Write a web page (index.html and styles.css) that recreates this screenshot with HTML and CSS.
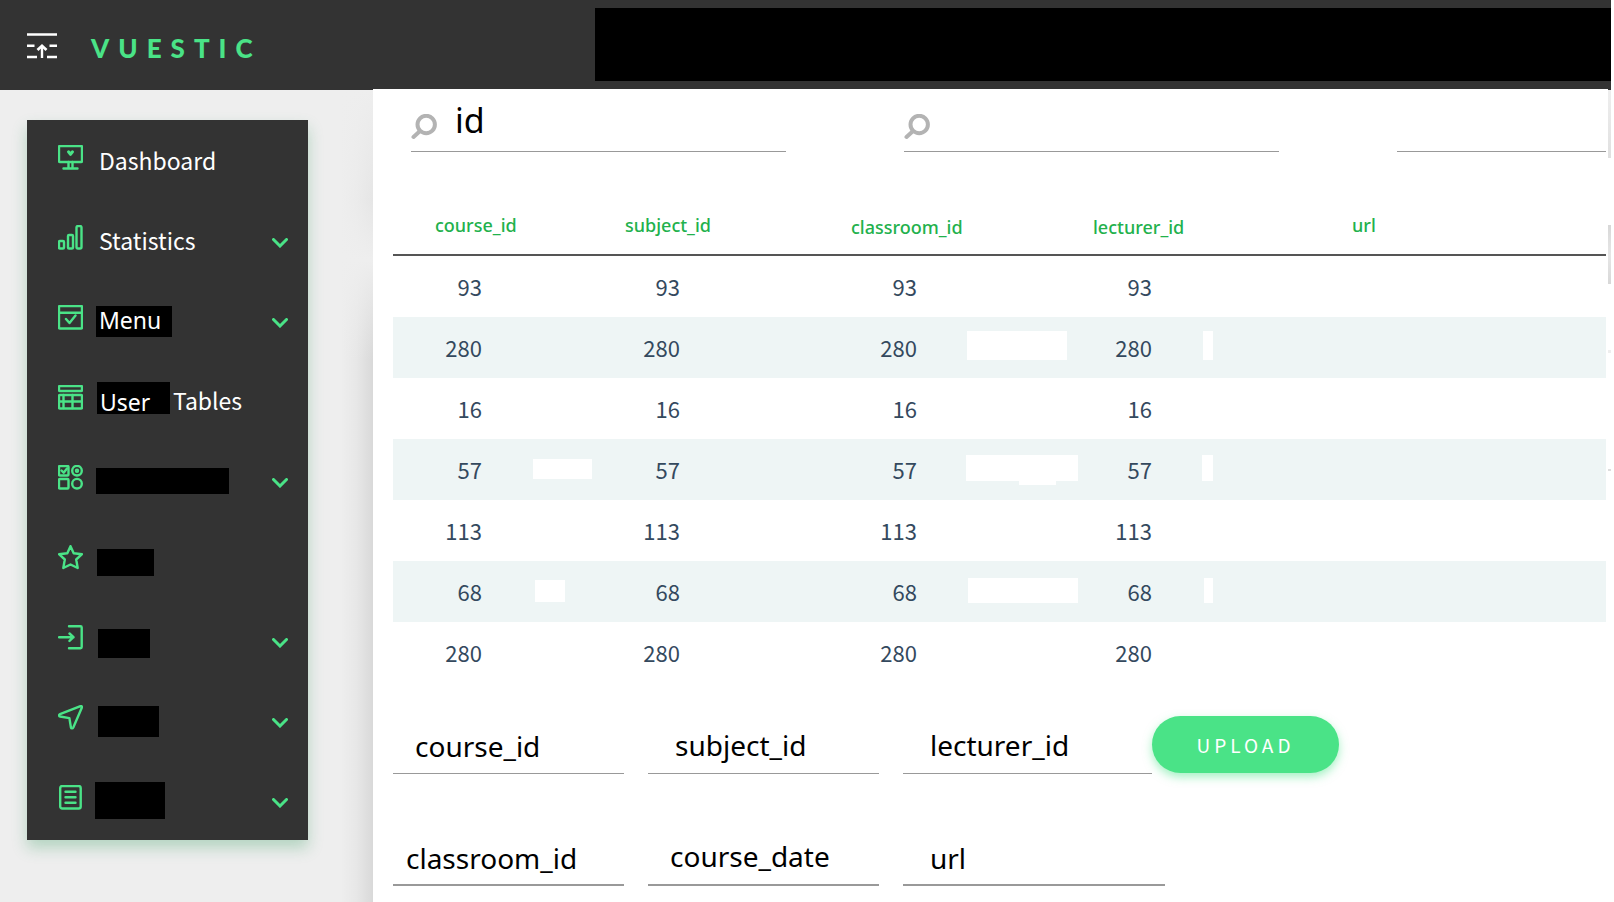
FILE: index.html
```html
<!DOCTYPE html>
<html lang="en">
<head>
<meta charset="utf-8">
<title>Vuestic</title>
<link rel="stylesheet" href="styles.css">
</head>
<body>
<header class="topbar">
  <button class="menu-toggle" type="button" aria-label="Toggle menu">
    <svg width="30" height="26" viewBox="0 0 30 26" fill="none" stroke="#fff" stroke-width="2.4"><path d="M0 1.5H30M0 12.7H7.5M22.5 12.7H30M0 24H10M20 24H30"/><path d="M15 25V13.5" /><path d="M10.500 17L15 12.8L19.500 17" stroke-width="2.800"/></svg>
  </button>
  <a class="logo" href="#">VUESTIC</a>
  <div class="topbar-mask"></div>
</header>
<div class="layout">
  <nav class="sidebar">
    <ul class="menu">
      <li><a class="item" href="#"><svg class="icon" viewBox="0 0 25 25"><rect x="1" y="1" width="23" height="16" rx="1"/><path d="M10.500 17v6M14.500 17v6M5.500 23.500h14"/><path d="M10.500 6.800l2 2.500 2-2.500" stroke-width="3"/></svg><span class="label">Dashboard</span></a></li>
      <li><a class="item" href="#"><svg class="icon" viewBox="0 0 25 25"><rect x="1" y="16" width="5" height="7.500" rx="1"/><rect x="10" y="10" width="5" height="13.500" rx="1"/><rect x="18.500" y="1" width="5" height="22.500" rx="1.500"/></svg><span class="label">Statistics</span><svg class="chevron" viewBox="0 0 16 10"><path d="M1.500 1.500L8 8L14.500 1.500"/></svg></a></li>
      <li><a class="item" href="#"><svg class="icon" viewBox="0 0 25 25"><rect x="1" y="1" width="23" height="22.500" rx="1"/><path d="M1 7.800h23M8 14l3.500 4 6-7.500"/></svg><span class="label boxed menu-box">Menu</span><svg class="chevron" viewBox="0 0 16 10"><path d="M1.500 1.500L8 8L14.500 1.500"/></svg></a></li>
      <li><a class="item" href="#"><svg class="icon" viewBox="0 0 25 25"><rect x="1" y="1" width="23" height="5" rx="1"/><rect x="1" y="10" width="23" height="13.500" rx="1"/><path d="M1 16.500h23M5.500 10v13M14.500 10v13"/></svg><span class="label boxed user-box">User</span><span class="label">Tables</span></a></li>
      <li><a class="item" href="#"><svg class="icon" viewBox="0 0 25 25"><rect x="1" y="1" width="9.500" height="9.500" rx="1"/><path d="M3.500 5.500l2.200 2.200L9 3.500"/><circle cx="19" cy="5.700" r="4.800"/><circle cx="19" cy="5.700" r="1"/><rect x="1" y="14" width="9.500" height="9.500" rx="1"/><circle cx="19" cy="18.700" r="4.800"/></svg><span class="mask mask-a"></span><svg class="chevron" viewBox="0 0 16 10"><path d="M1.500 1.500L8 8L14.500 1.500"/></svg></a></li>
      <li><a class="item" href="#"><svg class="icon" viewBox="0 0 25 25"><path d="M12.500 1.200l3.200 7 8.300 1-5.800 5.300 1.500 8.500-7.200-3.500-7.200 3.500 1.500-8.500L1 9.200l8.300-1z"/></svg><span class="mask mask-b"></span></a></li>
      <li><a class="item" href="#"><svg class="icon" viewBox="0 0 25 25"><path d="M11 1.200H22.500a1.200 1.200 0 0 1 1.200 1.200V22a1.200 1.200 0 0 1-1.200 1.200H11M1 12.200H15.500M11.500 8.500l4 3.700-4 3.700"/></svg><span class="mask mask-c"></span><svg class="chevron" viewBox="0 0 16 10"><path d="M1.500 1.500L8 8L14.500 1.500"/></svg></a></li>
      <li><a class="item" href="#"><svg class="icon" viewBox="0 0 25 25"><path d="M22.500 1.100L2 9.200c-1.300.6-1.200 2 .1 2.300l9.300 1.600 1.500 9.300c.3 1.300 1.800 1.300 2.400.1L23.900 2.500c.3-1-.5-1.700-1.400-1.400z"/></svg><span class="mask mask-d"></span><svg class="chevron" viewBox="0 0 16 10"><path d="M1.500 1.500L8 8L14.500 1.500"/></svg></a></li>
      <li><a class="item" href="#"><svg class="icon" viewBox="0 0 25 25"><rect x="2.200" y="1" width="20.500" height="22.500" rx="2"/><path d="M7.500 6.800h10M7.500 12.200h10M7.500 17.700h10"/></svg><span class="mask mask-e"></span><svg class="chevron" viewBox="0 0 16 10"><path d="M1.500 1.500L8 8L14.500 1.500"/></svg></a></li>
    </ul>
  </nav>
  <main class="panel">
    <div class="search">
      <label class="search-field"><svg class="glass" viewBox="0 0 26 26"><circle cx="15.200" cy="10.500" r="8.700"/><path d="M8.500 17.500L2.500 23"/></svg><input type="text" value="id" aria-label="Search id"></label>
      <label class="search-field"><svg class="glass" viewBox="0 0 26 26"><circle cx="15.200" cy="10.500" r="8.700"/><path d="M8.500 17.500L2.500 23"/></svg><input type="text" aria-label="Search"></label>
      <label class="search-field"><input type="text" aria-label="Filter"></label>
    </div>
    <table class="data">
      <colgroup><col class="c1"><col class="c2"><col class="c3"><col class="c4"><col></colgroup>
      <thead><tr><th class="h1">course_id</th><th class="h2">subject_id</th><th class="h3">classroom_id</th><th class="h4">lecturer_id</th><th class="h5">url</th></tr></thead>
      <tbody>
        <tr><td>93</td><td>93</td><td>93</td><td>93</td><td></td></tr>
        <tr><td>280</td><td>280</td><td>280<i class="blank r2c3"></i></td><td>280<i class="blank r2c4"></i></td><td></td></tr>
        <tr><td>16</td><td>16</td><td>16</td><td>16</td><td></td></tr>
        <tr><td>57<i class="blank r4c1"></i></td><td>57</td><td>57<i class="blank r4c3"></i><i class="blank r4c3b"></i></td><td>57<i class="blank r4c4"></i></td><td></td></tr>
        <tr><td>113</td><td>113</td><td>113</td><td>113</td><td></td></tr>
        <tr><td>68<i class="blank r6c1"></i></td><td>68</td><td>68<i class="blank r6c3"></i></td><td>68<i class="blank r6c4"></i></td><td></td></tr>
        <tr><td>280</td><td>280</td><td>280</td><td>280</td><td></td></tr>
      </tbody>
    </table>
    <form class="upload">
      <div class="row">
        <input class="f1 in22 low" type="text" value="course_id" aria-label="course_id">
        <input class="f1 in28" type="text" value="subject_id" aria-label="subject_id">
        <input class="f2 in28" type="text" value="lecturer_id" aria-label="lecturer_id">
        <button class="btn" type="button">UPLOAD</button>
      </div>
      <div class="row second">
        <input class="f1 in14 low" type="text" value="classroom_id" aria-label="classroom_id">
        <input class="f1 in22" type="text" value="course_date" aria-label="course_date">
        <input class="f3 in28 low" type="text" value="url" aria-label="url">
      </div>
    </form>
  </main>
</div>
</body>
</html>
```
FILE: styles.css
```css
* { box-sizing: border-box; }
html { background: #fff; }
body {
  margin: 0 3px 0 0;
  min-height: 100vh;
  background: #eee;
  display: flex;
  flex-direction: column;
  overflow: hidden;
  font-family: "Noto Sans CJK SC", "Noto Sans", sans-serif;
}
.topbar {
  height: 90px;
  flex: none;
  display: flex;
  align-items: flex-start;
  background: #333;
}
.menu-toggle {
  margin: 33px 0 0 27px;
  padding: 0;
  border: 0;
  background: none;
  line-height: 0;
}
.logo {
  width: 538px;
  margin-top: 32px;
  padding-left: 34px;
  color: #4ae387;
  font: 900 26px/32px Lato, sans-serif;
  letter-spacing: 9px;
  text-decoration: none;
}
.topbar-mask {
  flex: 1;
  height: 73px;
  margin-top: 8px;
  background: #000;
}
.layout { flex: 1; display: flex; align-items: stretch; }
.sidebar { flex: none; width: 373px; padding: 30px 65px 0 27px; }
.menu {
  margin: 0;
  padding: 0;
  list-style: none;
  background: #333;
  box-shadow: 0 8px 14px rgba(60, 160, 100, .32);
}
.item {
  height: 80px;
  padding: 0 20px 0 31px;
  display: flex;
  align-items: center;
  color: #fff;
  font-size: 23px;
  line-height: 32px;
  text-decoration: none;
}
.icon {
  flex: none;
  width: 25px;
  height: 25px;
  margin: 0 13px 6px 0;
  fill: none;
  stroke: #4ae387;
  stroke-width: 2.4;
  stroke-linecap: round;
  stroke-linejoin: round;
}
.label { padding-left: 3px; }
.boxed {
  background: #000;
  font-family: "Noto Sans", sans-serif;
}
.menu-box { width: 76px; height: 31px; margin-top: 3px; line-height: 29px; }
.user-box { width: 73px; height: 32px; margin-left: 1px; margin-bottom: 4px; line-height: 40px; }
.chevron {
  width: 16px;
  height: 10px;
  margin: 5px 0 0 auto;
  fill: none;
  stroke: #4ae387;
  stroke-width: 3;
  stroke-linecap: round;
}
.mask { background: #000; margin-top: 2px; }
.mask-a { width: 133px; height: 26px; }
.mask-b { width: 57px; height: 27px; margin-left: 1px; margin-top: 5px; }
.mask-c { width: 52px; height: 29px; margin-left: 2px; margin-top: 7px; }
.mask-d { width: 61px; height: 31px; margin-left: 2px; }
.mask-e { width: 70px; height: 37px; margin-left: -1px; margin-top: 1px; }
.panel {
  position: relative;
  flex: 1;
  min-width: 0;
  margin: -1px 3px 0 0;
  padding: 0 2px 0 20px;
  background: #fff;
}
.panel::before {
  content: "";
  position: absolute;
  top: 1px;
  right: 100%;
  bottom: 0;
  width: 32px;
  background:
    linear-gradient(#eee 0, rgba(238, 238, 238, .6) 110px, #eee 170px, rgba(238, 238, 238, 0) 270px),
    linear-gradient(to right, rgba(0, 0, 0, 0), rgba(0, 0, 0, .03) 50%, rgba(0, 0, 0, .09));
}
.panel::after {
  content: "";
  position: absolute;
  top: 1px;
  left: 100%;
  bottom: 0;
  width: 3px;
  background: linear-gradient(#eee 0, #e0e0e0 68px, #fff 68px, #fff 135px, #d8d8d8 135px, #e6e6e6 165px, #d8d8d8 194px, #fff 194px, #fff 260px, #eee 260px, #eee 263px, #fff 263px, #fff 379px, #ddd 379px, #ddd 381px, #fff 381px);
}
.search {
  display: flex;
  gap: 118px;
  padding-left: 18px;
  overflow: hidden;
}
.search-field {
  flex: none;
  width: 375px;
  height: 63px;
  display: flex;
  align-items: flex-start;
  border-bottom: 1px solid #999;
}
.glass {
  flex: none;
  width: 26px;
  height: 26px;
  margin-top: 25px;
  fill: none;
  stroke: #b3b3b3;
  stroke-width: 4;
  stroke-linecap: round;
}
.search-field input {
  width: 100%;
  min-width: 0;
  height: 48px;
  margin-top: 7px;
  padding: 0 0 0 18px;
  border: 0;
  background: none;
  color: #000;
  font: 34px/48px "Noto Sans", sans-serif;
}
.data {
  width: 100%;
  margin-top: 52px;
  table-layout: fixed;
  border-collapse: separate;
  border-spacing: 0;
}
.c1 { width: 198px; }
.c2 { width: 237px; }
.c3 { width: 236px; }
.c4 { width: 236px; }
.data th {
  height: 52px;
  padding: 0;
  border-bottom: 2px solid #555;
  color: #22b14c;
  text-align: left;
  vertical-align: top;
  font: 500 18px/42px "Noto Sans", sans-serif;
}
.data .h1 { padding-left: 42px; }
.data .h2 { padding-left: 34px; }
.data .h3 { padding: 2px 0 0 23px; }
.data .h4 { padding: 2px 0 0 29px; }
.data .h5 { padding-left: 52px; }
.data td {
  position: relative;
  height: 61px;
  padding: 0 0 2px;
  color: #34495e;
  font-size: 22px;
  line-height: 32px;
}
.data td:nth-child(1) { text-align: right; padding-right: 109px; }
.data td:nth-child(n+2) { text-align: right; padding-right: 148px; }
.data td:nth-child(3) { padding-right: 147px; }
.data tbody tr:nth-child(even) { background: #eef5f5; }
.blank { position: absolute; background: #fff; }
.r2c3 { left: 139px; top: 14px; width: 100px; height: 29px; }
.r2c4 { left: 139px; top: 14px; width: 10px; height: 29px; }
.r4c1 { left: 140px; top: 20px; width: 59px; height: 20px; }
.r4c3 { left: 138px; top: 16px; width: 112px; height: 26px; }
.r4c3b { left: 191px; top: 42px; width: 37px; height: 4px; }
.r4c4 { left: 138px; top: 16px; width: 11px; height: 26px; }
.r6c1 { left: 142px; top: 19px; width: 30px; height: 22px; }
.r6c3 { left: 140px; top: 17px; width: 110px; height: 25px; }
.r6c4 { left: 140px; top: 17px; width: 9px; height: 25px; }
.upload { margin-top: 33px; }
.row { display: flex; align-items: flex-start; }
.row input {
  height: 58px;
  margin-right: 24px;
  border: 0;
  border-bottom: 1px solid #999;
  background: none;
  color: #000;
  font: 28px/40px "Noto Sans", sans-serif;
}
.second { margin-top: 54px; }
.second input { border-bottom-width: 2px; }
.row .f1 { width: 231px; }
.row .f2 { width: 249px; margin-right: 0; }
.row .f3 { width: 262px; }
.row .in14 { padding: 0 0 0 13px; }
.row .in22 { padding: 0 0 0 22px; }
.row .in28 { padding: 0 0 0 27px; }
.row .low { padding-top: 3px; }
.btn {
  width: 187px;
  height: 57px;
  padding: 0;
  border: 0;
  border-radius: 29px;
  background: #4ae387;
  box-shadow: 0 4px 10px rgba(74, 227, 135, .5);
  color: #fff;
  font: 19px/28px "Noto Sans CJK SC", sans-serif;
  letter-spacing: 4px;
}
```
